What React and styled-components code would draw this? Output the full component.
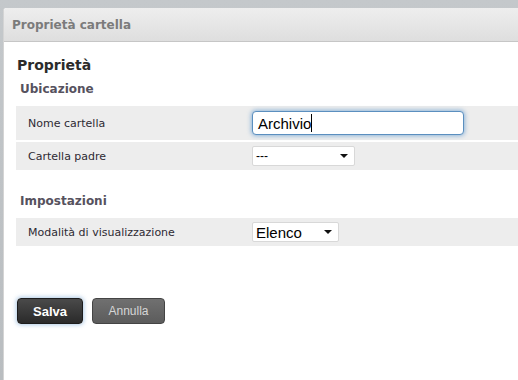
import styled, { createGlobalStyle } from "styled-components";

const GlobalStyle = createGlobalStyle`
  html, body {
    margin: 0;
    padding: 0;
    background: #c2c6c9;
  }
  body {
    font-family: "DejaVu Sans", Verdana, sans-serif;
  }
`;

const Backdrop = styled.div`
  height: 380px;
  box-sizing: border-box;
  padding: 8px 0 0 3px;
  background: linear-gradient(#c4c8cb, #b9bdc0);
  overflow: hidden;
`;

const Dialog = styled.div`
  height: 100%;
  background: #fff;
  border-top-left-radius: 3px;
  border-left: 1px solid #d4d4d4;
  display: flex;
  flex-direction: column;
`;

const Header = styled.div`
  height: 33px;
  flex-shrink: 0;
  display: flex;
  align-items: center;
  padding-left: 8px;
  background: linear-gradient(#eeeeee, #dedede);
  border-bottom: 1px solid #c6c6c6;
  border-top-left-radius: 3px;
  font-size: 12px;
  font-weight: bold;
  color: #7b7b7b;
`;

const Body = styled.div`
  padding: 14px 0 0 12px;
  display: flex;
  flex-direction: column;
`;

const Title = styled.h1`
  margin: 0 0 7px 1px;
  font-size: 14px;
  line-height: 18px;
  font-weight: bold;
  color: #2b2b2b;
`;

const Section = styled.h2`
  margin: ${(p) => p.$top || 0}px 0 9px 4px;
  font-size: 12px;
  line-height: 16px;
  font-weight: bold;
  color: #56525e;
`;

const Row = styled.div`
  display: flex;
  align-items: center;
  height: ${(p) => p.$h || 28}px;
  background: #ededed;
  margin-bottom: 2px;
`;

const Label = styled.div`
  width: 224px;
  padding-left: 12px;
  font-size: 11px;
  color: #2e2a33;
`;

const TextInput = styled.div`
  width: 212px;
  height: 24px;
  box-sizing: border-box;
  background: #fff;
  border: 1px solid #5b8fbf;
  border-radius: 4px;
  box-shadow: 0 0 4px 1px rgba(82, 145, 205, 0.6);
  display: flex;
  align-items: center;
  padding-left: 5px;
  font-family: "Liberation Sans", Arial, sans-serif;
  font-size: 15px;
  color: #000;
`;

const Caret = styled.span`
  display: inline-block;
  width: 1px;
  height: 18px;
  background: #000;
`;

const Select = styled.div`
  width: ${(p) => p.$w}px;
  height: 20px;
  box-sizing: border-box;
  background: #fff;
  border: 1px solid #d8d8d8;
  border-radius: 2px;
  display: flex;
  align-items: center;
  justify-content: space-between;
  padding: 0 6px 0 3px;
  font-family: "Liberation Sans", Arial, sans-serif;
  font-size: ${(p) => p.$fs || 15}px;
  color: #000;
`;

const Arrow = styled.span`
  width: 0;
  height: 0;
  border-left: 4px solid transparent;
  border-right: 4px solid transparent;
  border-top: 4px solid #111;
`;

const Buttons = styled.div`
  display: flex;
  gap: 9px;
  margin: 50px 0 0 1px;
`;

const Button = styled.button`
  height: 26px;
  width: ${(p) => p.$w}px;
  border-radius: 4px;
  font-family: "Liberation Sans", Arial, sans-serif;
  font-size: ${(p) => (p.$primary ? 13 : 12)}px;
  padding: 0;
  cursor: pointer;
  border: 1px solid ${(p) => (p.$primary ? "#1c1c1c" : "#444")};
  background: ${(p) =>
    p.$primary
      ? "linear-gradient(#4a4a4a, #2a2a2a)"
      : "linear-gradient(#707070, #5c5c5c)"};
  color: ${(p) => (p.$primary ? "#fff" : "#d6d6d6")};
  font-weight: ${(p) => (p.$primary ? "bold" : "normal")};
  box-shadow: ${(p) =>
    p.$primary ? "0 0 4px 1px rgba(110, 160, 210, 0.55)" : "none"};
`;

export default function App() {
  return (
    <>
      <GlobalStyle />
      <Backdrop>
        <Dialog>
          <Header>Proprietà cartella</Header>
          <Body>
            <Title>Proprietà</Title>
            <Section>Ubicazione</Section>
            <Row $h={34}>
              <Label>Nome cartella</Label>
              <TextInput>
                Archivio
                <Caret />
              </TextInput>
            </Row>
            <Row>
              <Label>Cartella padre</Label>
              <Select $w={103} $fs={12}>
                ---
                <Arrow />
              </Select>
            </Row>
            <Section $top={21}>Impostazioni</Section>
            <Row>
              <Label>Modalità di visualizzazione</Label>
              <Select $w={87}>
                Elenco
                <Arrow />
              </Select>
            </Row>
            <Buttons>
              <Button $primary $w={66}>
                Salva
              </Button>
              <Button $w={73}>Annulla</Button>
            </Buttons>
          </Body>
        </Dialog>
      </Backdrop>
    </>
  );
}
